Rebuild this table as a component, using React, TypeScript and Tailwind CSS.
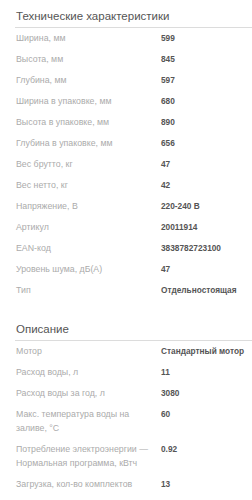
import React from "react";

const tech: [string, string][] = [
  ["Ширина, мм", "599"],
  ["Высота, мм", "845"],
  ["Глубина, мм", "597"],
  ["Ширина в упаковке, мм", "680"],
  ["Высота в упаковке, мм", "890"],
  ["Глубина в упаковке, мм", "656"],
  ["Вес брутто, кг", "47"],
  ["Вес нетто, кг", "42"],
  ["Напряжение, В", "220-240 В"],
  ["Артикул", "20011914"],
  ["EAN-код", "3838782723100"],
  ["Уровень шума, дБ(А)", "47"],
  ["Тип", "Отдельностоящая"],
];

const desc: [string, string][] = [
  ["Мотор", "Стандартный мотор"],
  ["Расход воды, л", "11"],
  ["Расход воды за год, л", "3080"],
  ["Макс. температура воды на заливе, °C", "60"],
  ["Потребление электроэнергии — Нормальная программа, кВтч", "0.92"],
  ["Загрузка, кол-во комплектов", "13"],
];

function Section({ title, rows }: { title: string; rows: [string, string][] }) {
  return (
    <div>
      <div className="ml-[15px] pl-[1px] pb-[1px] text-[11.5px] leading-[20px] text-[#555] border-b border-[#dcdcdc]">
        {title}
      </div>
      <div className="pt-[3px] pl-[16px]">
        {rows.map(([k, v]) => (
          <div key={k} className="flex pb-[7px]">
            <div className="w-[145px] shrink-0 pr-[4px] text-[8.8px] leading-[14px] text-[#ababab]">{k}</div>
            <div className="text-[8.3px] leading-[14px] font-bold text-[#555]">{v}</div>
          </div>
        ))}
      </div>
    </div>
  );
}

export default function App() {
  return (
    <div
      className="w-[252px] h-[500px] bg-white overflow-hidden pt-[6px]"
      style={{ fontFamily: '"Liberation Sans", Arial, sans-serif' }}
    >
      <Section title="Технические характеристики" rows={tech} />
      <div className="h-[15px]" />
      <Section title="Описание" rows={desc} />
    </div>
  );
}
